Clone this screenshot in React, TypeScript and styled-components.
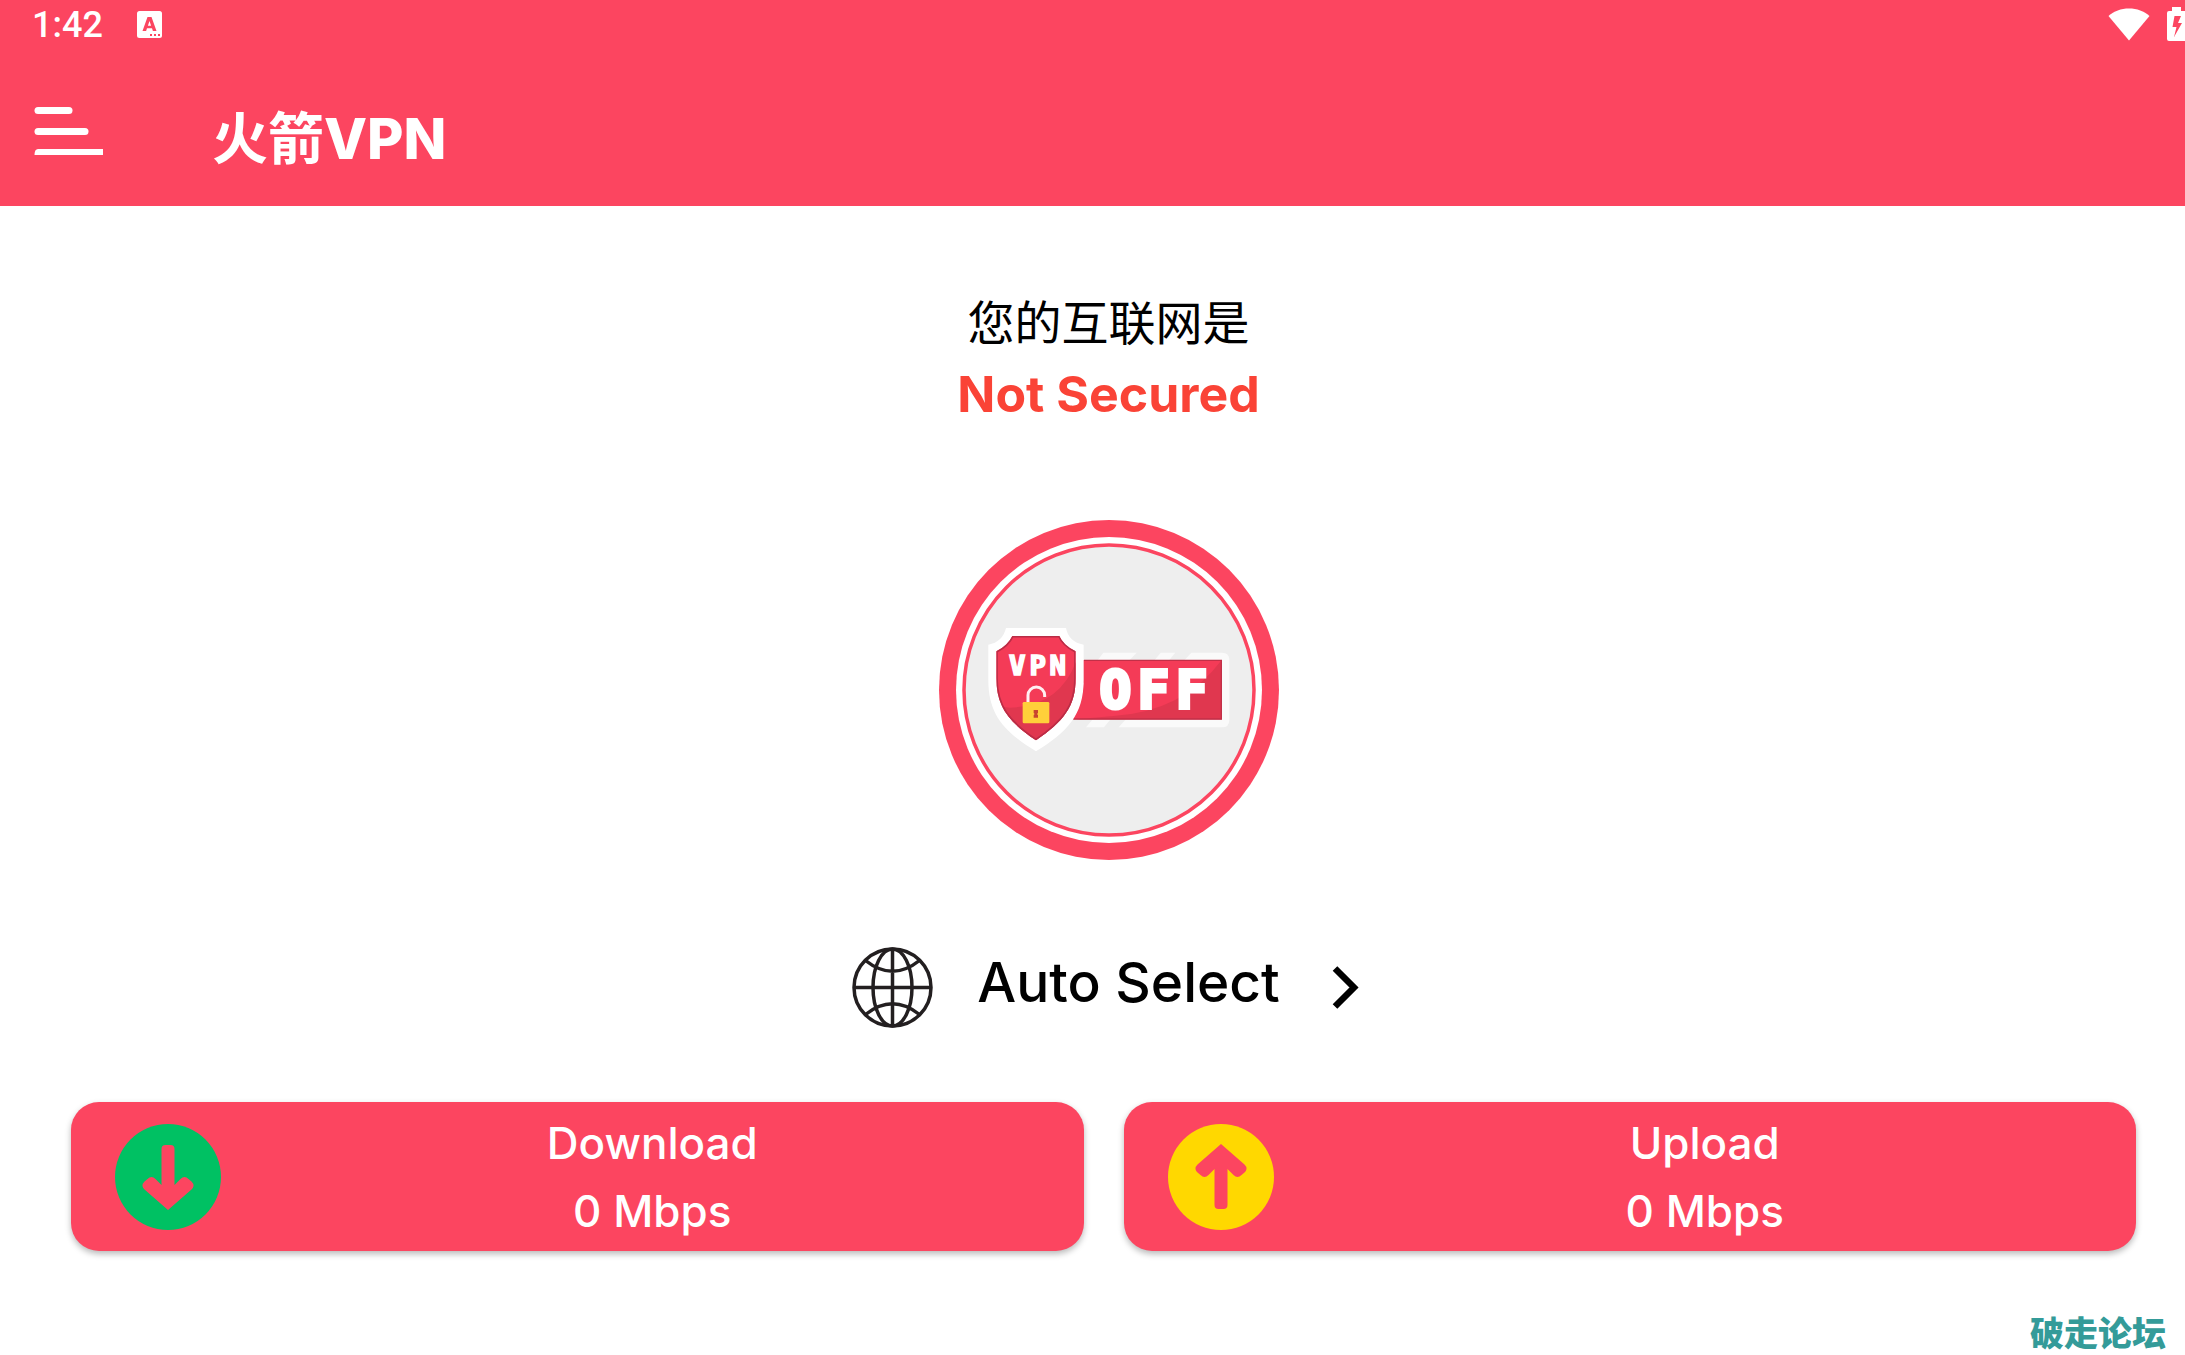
import React from "react";
import styled, { createGlobalStyle } from "styled-components";

const brand = "#fc4560";

const GlobalStyle = createGlobalStyle`
  *, *::before, *::after { box-sizing: border-box; }
  body {
    margin: 0;
    background: #fff;
    overflow: hidden;
    font-family: Inter, "Noto Sans CJK SC", sans-serif;
  }
  button { font: inherit; border: 0; padding: 0; background: none; cursor: pointer; color: inherit; }
  svg { display: block; }
`;

/* The device surface runs a little past the right edge of the window. */
const Screen = styled.div`
  width: calc(100% + 32px);
  min-height: 100vh;
  display: flex;
  flex-direction: column;
`;

const TopArea = styled.header`
  background: ${brand};
  color: #fff;
`;

const StatusBar = styled.div`
  display: flex;
  align-items: center;
  justify-content: space-between;
  height: 48px;
  padding: 0 20px 0 32px;
`;

const StatusGroup = styled.div`
  display: flex;
  align-items: center;
  gap: ${(p: { $gap: number }) => p.$gap}px;
`;

const Clock = styled.time`
  padding-top: 2px;
  font-family: Roboto, sans-serif;
  font-size: 36px;
  font-weight: 500;
  line-height: 48px;
`;

const AppBar = styled.div`
  display: flex;
  align-items: flex-start;
  gap: 108px;
  height: 158px;
  padding: 56px 34px 0;
`;

const AppTitle = styled.h1`
  margin: 0;
  font-size: 56px;
  font-weight: 800;
  line-height: 70px;
`;

const TitleHan = styled.span`
  font-weight: 700;
`;

const Main = styled.main`
  display: flex;
  flex-direction: column;
  align-items: center;
  padding-top: 80px;
`;

const StatusLabel = styled.p`
  margin: 0;
  font-family: "Noto Sans CJK SC", sans-serif;
  font-size: 47px;
  font-weight: 400;
  line-height: 68px;
  color: #000;
`;

const StatusValue = styled.p`
  margin: 4px 0 0;
  font-size: 50px;
  font-weight: 700;
  line-height: 72px;
  color: #fa4336;
`;

const PowerButton = styled.button`
  margin-top: 90px;
  border-radius: 50%;
`;

const ServerButton = styled.button`
  display: flex;
  align-items: center;
  margin-top: 87px;
  padding-right: 6px;
  color: #000;
`;

const ServerName = styled.span`
  margin: 0 52px 12px 44px;
  font-size: 55px;
  font-weight: 500;
  line-height: 68px;
`;

const Cards = styled.section`
  display: grid;
  grid-template-columns: 1fr 1fr;
  gap: 40px;
  width: 100%;
  margin-top: 74px;
  padding: 0 81px 0 71px;
`;

const Card = styled.article`
  display: flex;
  align-items: center;
  height: 149px;
  padding-left: 44px;
  border-radius: 28px;
  background: ${brand};
  color: #fff;
  box-shadow: 0 3px 6px rgba(0, 0, 0, 0.28);
`;

const CardText = styled.div`
  flex: 1;
  text-align: center;
  font-size: 44px;
  font-weight: 500;
  line-height: 68px;
`;

const CardLine = styled.p`
  margin: 0;
`;

const Footer = styled.footer`
  margin-top: auto;
  padding: 0 51px 0 0;
  text-align: right;
  font-family: "Noto Sans CJK SC", sans-serif;
  font-size: 34px;
  font-weight: 800;
  line-height: 46px;
  color: #349b99;
`;

const KeyboardIcon = () => (
  <svg width="25" height="27" viewBox="0 0 25 27" aria-hidden="true">
    <rect width="25" height="27" rx="2.5" fill="#fff" />
    <path
      fillRule="evenodd"
      fill={brand}
      d="M10.5 6h4l5 14h-3.600l-.9-2.700h-5L9.100 20H5.500zM12.500 10l-1.600 4.800h3.200z"
    />
    <path d="M13 23h2v2h-2zM17 23h2v2h-2zM21 23h2v2h-2z" fill={brand} />
  </svg>
);

const WifiIcon = () => (
  <svg width="42" height="33" viewBox="0 0 42 33" aria-hidden="true">
    <path d="M0.500 8C6 3 13 .5 21 .5S36 3 41.500 8L21 32.500z" fill="#fff" />
  </svg>
);

const BatteryIcon = () => (
  <svg width="30" height="34" viewBox="0 0 22 34" preserveAspectRatio="xMinYMid meet" aria-hidden="true">
    <path
      fillRule="evenodd"
      fill="#fff"
      d="M5 0h9v4h4q2 0 2 2v26q0 2-2 2H2q-2 0-2-2V6q0-2 2-2h3zM7.500 9L5.500 20h4l-2.500 10L15 16h-4l3-7z"
    />
  </svg>
);

const MenuIcon = () => (
  <svg width="70" height="54" viewBox="0 0 70 54" aria-hidden="true" fill="#fff">
    <rect x="0.500" y="3" width="38" height="7" rx="3.500" />
    <rect x="0.500" y="24" width="54" height="7" rx="3.500" />
    <path d="M4 45h65v6H0.500q0-6 3.500-6z" />
  </svg>
);

const shield =
  "M127 78H268Q280 106 317 124V205C317 290 280 335 198 391C116 335 79 290 79 205V124Q114 106 127 78Z";

const VpnOffBadge = () => (
  <svg width="340" height="340" viewBox="0 0 340 340" aria-hidden="true">
    <defs>
      <clipPath id="shieldClip"><path d={shield} /></clipPath>
    </defs>
    <circle cx="170" cy="170" r="170" fill={brand} />
    <circle cx="170" cy="170" r="153" fill="#fff" />
    <circle cx="170" cy="170" r="145" fill="#eee" stroke={brand} strokeWidth="3.5" />
    <g transform="translate(31 90) scale(0.33333)">
      <path d="M400 128H500L470 160H376zM572 128H616L590 160H546zM664 128H756Q778 128 778 150V330Q778 352 756 352H446L474 320H745V158H636zM376 318H430L402 352H348z" fill="#fafafa" />
      <path d="M320 150H755V328H308Q336 280 340 220z" fill="#f43b57" />
      <path d="M755 150V328H320L430 318Q640 305 755 150z" fill="#e0374f" />
      <path d="M342 151H754V327H310" fill="none" stroke="#c23048" strokeWidth="4" />
      <path d="M108 54H288Q296 96 341 104V210C341 315 292 366 198 424C104 366 55 315 55 210V104Q98 96 108 54Z" fill="#fff" />
      <path d={shield} fill="#f43b57" />
      <g clipPath="url(#shieldClip)">
        <path d="M320 150Q270 290 120 293L76 288V400H320z" fill="#e0374f" />
        <path d={shield} fill="none" stroke="#b92d46" strokeWidth="9" />
      </g>
      <path d="M174 280V256A25 25 0 0 1 224 256V261" fill="none" stroke="#fff0f2" strokeWidth="9" />
      <rect x="158" y="276" width="80" height="64" rx="4" fill="#ffd03a" />
      <path d="M191 300h13v9l-3 3 3 3v8h-13v-8l3-3-3-3z" fill="#c8452f" />
      <g fill="#fff" stroke="#fff" textAnchor="middle" fontFamily="DejaVu Sans Mono, monospace" fontWeight="700">
        <g fontSize="82" strokeWidth="5">
          <text x="142" y="195">V</text>
          <text x="203" y="195">P</text>
          <text x="263" y="195">N</text>
        </g>
        <g fontSize="156" strokeWidth="12">
          <text x="436" y="294">O</text>
          <text x="550" y="294">F</text>
          <text x="665" y="294">F</text>
        </g>
      </g>
    </g>
  </svg>
);

const GlobeIcon = () => (
  <svg width="81" height="81" viewBox="0 0 81 81" fill="none" stroke="#231f20" strokeWidth="3.5" aria-hidden="true">
    <circle cx="40.500" cy="40.500" r="38.500" />
    <ellipse cx="40.500" cy="40.500" rx="19.500" ry="38.500" />
    <path d="M40.500 1.500v78M1.500 40.500h78M13.500 13.500Q40.500 35 67.500 13.500M13.500 67.500Q40.500 46 67.500 67.500" />
  </svg>
);

const ChevronIcon = () => (
  <svg width="27" height="43" viewBox="0 0 27 43" fill="none" stroke="#000" strokeWidth="6.500" aria-hidden="true">
    <path d="M3 2.500L22 21.500L3 40.500" />
  </svg>
);

const ArrowDisc = ({ color, up }: { color: string; up?: boolean }) => (
  <svg width="106" height="106" viewBox="0 0 106 106" aria-hidden="true">
    <circle cx="53" cy="53" r="53" fill={color} />
    <path
      transform={up ? "rotate(180 53 53)" : undefined}
      fill={brand}
      d="M46.500 25q0-4 4-4h5q4 0 4 4v36l6-6q4-4 8 0l3 2.500q4 4 0 8L53 86L29.500 65.500q-4-4 0-8l3-2.500q4-4 8 0l6 6z"
    />
  </svg>
);

const SpeedCard = ({ title, value, color, up }: { title: string; value: string; color: string; up?: boolean }) => (
  <Card>
    <ArrowDisc color={color} up={up} />
    <CardText>
      <CardLine>{title}</CardLine>
      <CardLine>{value}</CardLine>
    </CardText>
  </Card>
);

export default function App() {
  return (
    <>
      <GlobalStyle />
      <Screen>
        <TopArea>
          <StatusBar>
            <StatusGroup $gap={34}>
              <Clock>1:42</Clock>
              <KeyboardIcon />
            </StatusGroup>
            <StatusGroup $gap={17}>
              <WifiIcon />
              <BatteryIcon />
            </StatusGroup>
          </StatusBar>
          <AppBar>
            <button type="button" aria-label="Menu"><MenuIcon /></button>
            <AppTitle><TitleHan>火箭</TitleHan>VPN</AppTitle>
          </AppBar>
        </TopArea>
        <Main>
          <StatusLabel>您的互联网是</StatusLabel>
          <StatusValue>Not Secured</StatusValue>
          <PowerButton type="button" aria-label="VPN OFF"><VpnOffBadge /></PowerButton>
          <ServerButton type="button">
            <GlobeIcon />
            <ServerName>Auto Select</ServerName>
            <ChevronIcon />
          </ServerButton>
          <Cards>
            <SpeedCard title="Download" value="0 Mbps" color="#00c163" />
            <SpeedCard title="Upload" value="0 Mbps" color="#ffd800" up />
          </Cards>
        </Main>
        <Footer>破走论坛</Footer>
      </Screen>
    </>
  );
}
